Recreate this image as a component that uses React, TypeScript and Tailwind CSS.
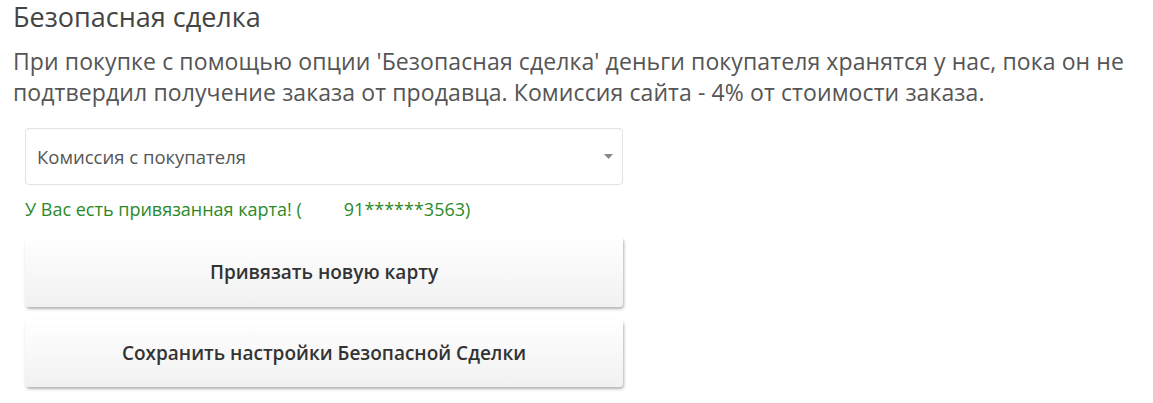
export default function App() {
  return (
    <div className="min-h-[403px] bg-white pl-[13px] pt-[1px] font-['Open_Sans',sans-serif] text-[#555]">
      <h2 className="text-[27px] leading-[32px] text-[#444]">Безопасная сделка</h2>
      <p className="mt-[13px] text-[23px] leading-[31px] tracking-[0.1px] text-[#555]">
        При покупке с помощью опции 'Безопасная сделка' деньги покупателя хранятся у нас, пока он не
        <br />
        подтвердил получение заказа от продавца. Комиссия сайта - 4% от стоимости заказа.
      </p>

      <div className="mt-[20px] ml-[12px] w-[598px]">
        <div className="flex h-[57px] items-center justify-between rounded-[4px] border border-[#e2e2e2] bg-white pl-[11px] pr-[9px]">
          <span className="text-[18.5px] text-[#555]">Комиссия с покупателя</span>
          <svg width="9" height="5" viewBox="0 0 9 5">
            <path d="M0 0h9L4.5 5z" fill="#888" />
          </svg>
        </div>

        <div className="mt-[12px] flex text-[18px] leading-[24px] text-[#2a8a2a]">
          <span>У Вас есть привязанная карта! (</span>
          <span className="ml-[42px]">91******3563)</span>
        </div>

        <div className="mt-[16px] flex flex-col gap-[13px]">
          <button
            type="button"
            className="h-[70px] w-[598px] rounded-[4px] bg-gradient-to-b from-white to-[#f1f1f1] text-[19px] font-semibold text-[#333] shadow-[1px_2px_3px_rgba(0,0,0,0.3)]"
          >
            Привязать новую карту
          </button>
          <button
            type="button"
            className="h-[67px] w-[598px] rounded-[4px] bg-gradient-to-b from-white to-[#f1f1f1] text-[19px] font-semibold text-[#333] shadow-[1px_2px_3px_rgba(0,0,0,0.3)]"
          >
            Сохранить настройки Безопасной Сделки
          </button>
        </div>
      </div>
    </div>
  );
}
